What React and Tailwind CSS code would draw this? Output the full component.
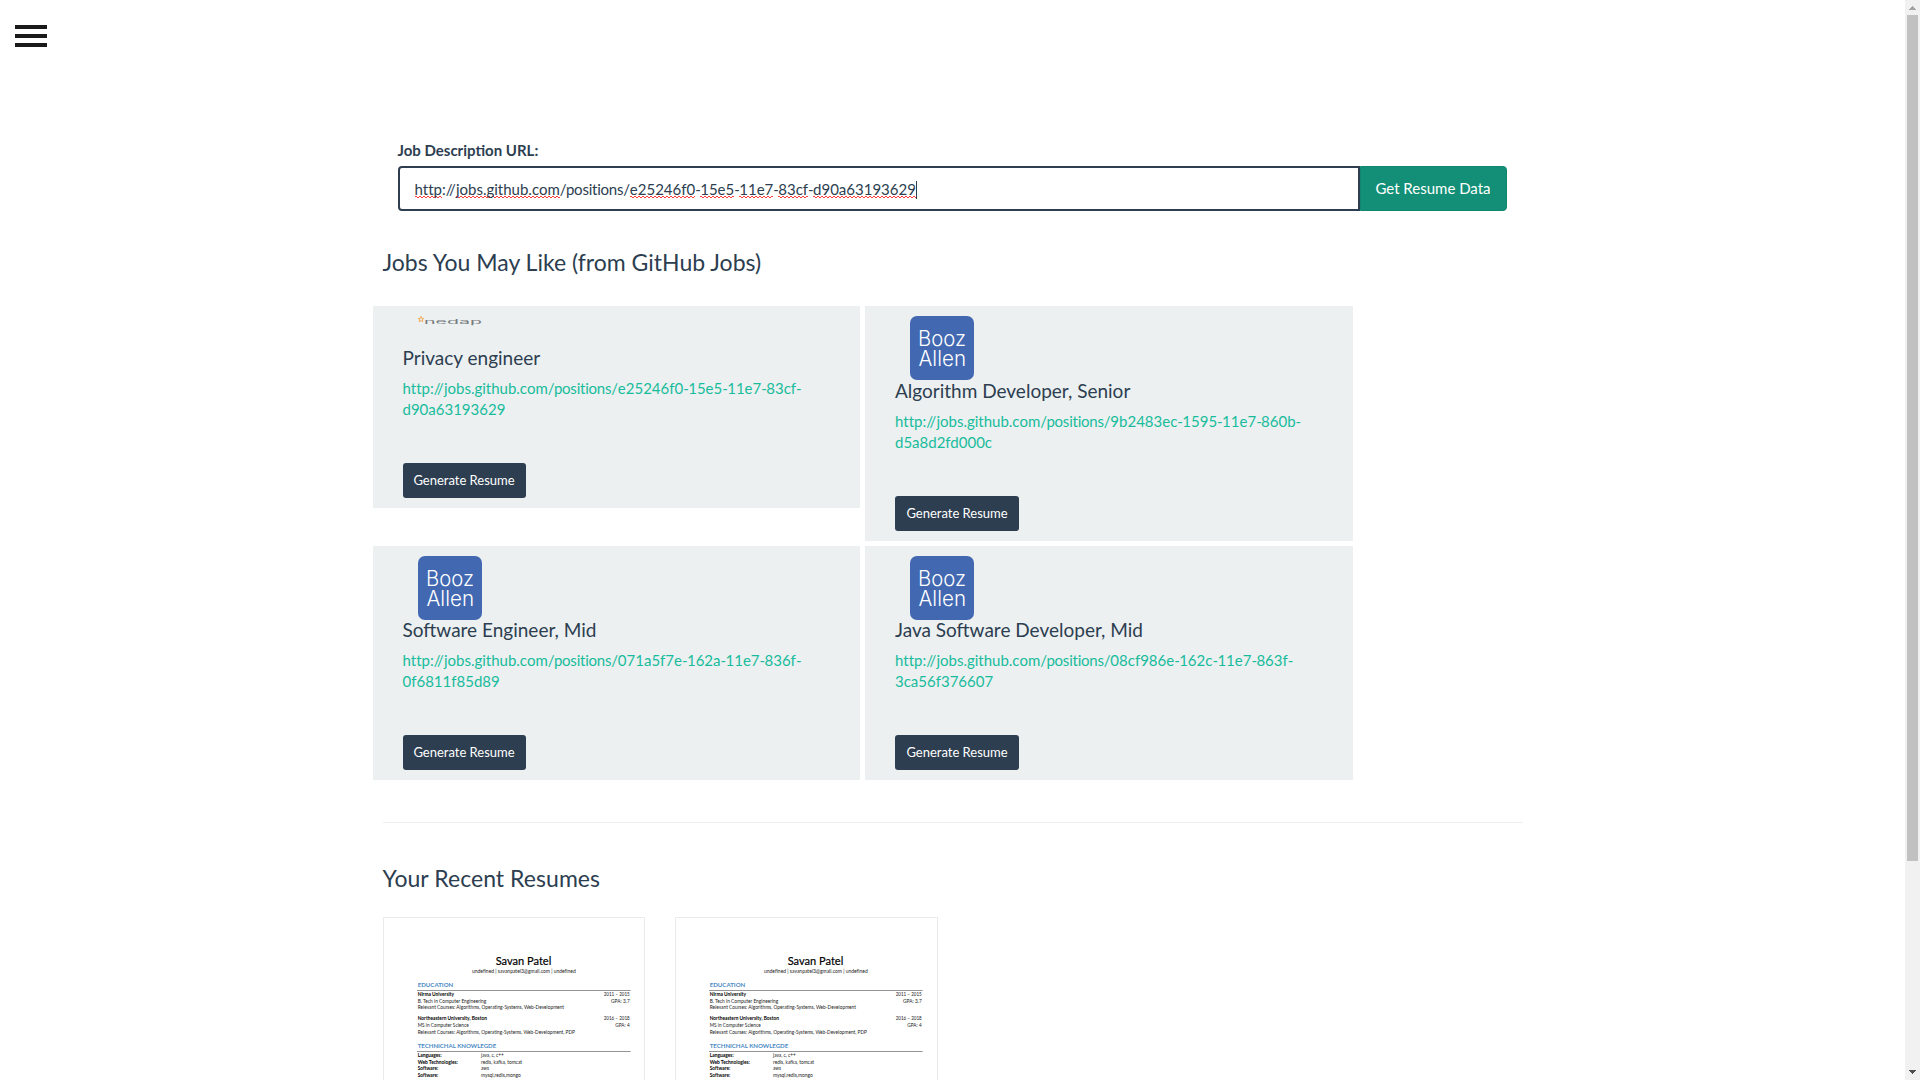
const JOBS = [
  { title: "Privacy engineer", id: "e25246f0-15e5-11e7-83cf-d90a63193629", logo: "nedap", box: "h-[202px]", titleGap: "pt-[21px]", button: "w-[123px]" },
  { title: "Algorithm Developer, Senior", id: "9b2483ec-1595-11e7-860b-d5a8d2fd000c", logo: "booz", box: "h-[235px]", titleGap: "pt-0", button: "w-[124px]" },
  { title: "Software Engineer, Mid", id: "071a5f7e-162a-11e7-836f-0f6811f85d89", logo: "booz", box: "h-[234px]", titleGap: "-mt-px", button: "w-[123px]" },
  { title: "Java Software Developer, Mid", id: "08cf986e-162c-11e7-863f-3ca56f376607", logo: "booz", box: "h-[234px]", titleGap: "-mt-px", button: "w-[124px]" },
];

const URL_PARTS = [
  ["http", true], ["://", false], ["jobs.github.com", true], ["/positions/", false],
  ["e25246f0", true], ["-", false], ["15e5", true], ["-", false], ["11e7", true],
  ["-", false], ["83cf", true], ["-", false], ["d90a63193629", true],
];

const PART_TRACKING = { "-": "tracking-[-0.6px]", "/positions/": "tracking-[-0.22px]" };

// [text, x, baseline, width, style]
const RESUME = [
  ["Savan Patel", 112.7, 47.5, 55.6, "name"],
  ["undefined | savanpatel3@gmail.com | undefined", 89, 56, 103.7, "body"],
  ["EDUCATION", 34.7, 70, 35.6, "head"],
  ["Nirma University", 34.7, 79, 36.4, "bold"],
  ["2011 – 2015", 220.7, 79, 26, "body"],
  ["B. Tech in Computer Engineering", 34.7, 86, 68.6, "body"],
  ["GPA: 3.7", 228, 86, 18.7, "body"],
  ["Relevant Courses: Algorithms, Operating-Systems, Web-Development", 34.7, 92, 146.3, "body"],
  ["Northeastern University, Boston", 34.7, 103, 69.3, "bold"],
  ["2016 – 2018", 220.7, 103, 26, "body"],
  ["MS in Computer Science", 34.7, 110, 51, "body"],
  ["GPA: 4", 232.3, 110, 14.4, "body"],
  ["Relevant Courses: Algorithms, Operating-Systems, Web-Development, PDP", 34.7, 117, 157.3, "body"],
  ["TECHNICHAL KNOWLEGDE", 34.7, 131, 78.5, "head"],
  ["Languages:", 34.7, 140, 24, "bold"],
  ["java, c, c++", 98, 140, 22.7, "body"],
  ["Web Technologies:", 34.7, 147, 40.3, "bold"],
  ["redis, kafka, tomcat", 98, 147, 41, "body"],
  ["Software:", 34.7, 153, 20.6, "bold"],
  ["aws", 98, 153, 8, "body"],
  ["Software:", 34.7, 160, 20.6, "bold"],
  ["mysql,redis,mongo", 98, 160, 39.7, "body"],
];

const RESUME_STYLES = {
  name: "text-[12px] fill-black stroke-black [stroke-width:0.2px]",
  body: "text-[5.9px] fill-[#222]",
  bold: "text-[5.9px] font-bold fill-black",
  head: "text-[5.8px] font-bold fill-[#4a8ac4]",
};

function BoozLogo() {
  return (
    <svg className="block h-16 w-16" viewBox="0 0 64 64">
      <rect width="64" height="64" rx="7" fill="#4168b1" />
      <g fill="#fff" className="font-['Inter'] text-[21px] font-light">
        <text x="8" y="29.7" textLength="48" lengthAdjust="spacingAndGlyphs">Booz</text>
        <text x="8.5" y="50" textLength="47.5" lengthAdjust="spacingAndGlyphs">Allen</text>
      </g>
    </svg>
  );
}

function NedapLogo() {
  return (
    <svg className="block h-[10px] w-16" viewBox="0 0 64 10">
      <path d="M3 0.4L3.7 2.3L5.8 2.5L4.2 3.7L4.8 5.7L3 4.6L1.2 5.7L1.8 3.7L0.2 2.5L2.3 2.3Z" stroke="#f2a03d" strokeWidth="0.8" fill="none" />
      <g transform="translate(6 7.9) scale(1 .6)">
        <text fill="#777c7f" className="font-['Inter'] text-[11px]" textLength="58" lengthAdjust="spacingAndGlyphs">nedap</text>
      </g>
    </svg>
  );
}

// Tightens the hyphens inside a posting's id.
function Hyphenated({ text }) {
  return text.split(/(?<=-)/).map((part, i) =>
    part.endsWith("-") ? (
      <span key={i}>{part.slice(0, -1)}<span className="tracking-[-0.6px]">-</span></span>
    ) : (
      <span key={i}>{part}</span>
    )
  );
}

function JobCard({ job }) {
  return (
    <article className={"flex flex-col bg-[#ecf0f1] px-[30px] py-[10px] " + job.box}>
      <div className="ml-[15px]">{job.logo === "booz" ? <BoozLogo /> : <NedapLogo />}</div>
      <div className={job.titleGap}>
        <h4 className="text-[19px] leading-[21px] text-[#2c3e50]">{job.title}</h4>
      </div>
      <a className="mt-[10px] block text-[15px] leading-[21px] text-[#18bc9c] [font-variant-ligatures:none]">
        http://jobs.github.com<span className="tracking-[-0.22px]">/positions/</span><Hyphenated text={job.id} />
      </a>
      <button className={"mt-auto h-[35px] rounded-[3px] bg-[#2c3e50] pb-[2px] text-[13px] leading-[20px] text-white " + job.button}>
        Generate Resume
      </button>
    </article>
  );
}

function ResumeThumb({ width }) {
  return (
    <div className={"h-[340px] border border-[#ecebeb] bg-white " + width}>
      <svg className="-mt-px -ml-px block h-[340px] w-[262px] font-['Lato'] [font-variant-ligatures:none]" viewBox="0 0 262 340">
        <path d="M34 73.5H247.7M34 134.5H247.7" stroke="#888" strokeWidth="0.9" />
        {RESUME.map(([text, x, y, w, kind], i) => (
          <text key={i} x={x} y={y} textLength={w} lengthAdjust="spacingAndGlyphs" className={RESUME_STYLES[kind]}>{text}</text>
        ))}
      </svg>
    </div>
  );
}

export default function App() {
  return (
    <div className="flex h-[1080px] overflow-hidden bg-white font-['Lato',sans-serif] text-[15px] text-[#2c3e50]">
      <div className="relative flex-1 overflow-hidden">
        <button className="absolute top-[25px] left-[15px] flex flex-col gap-[5px]">
          <span className="block h-1 w-8 bg-[#1a1a1a]" />
          <span className="block h-1 w-8 bg-[#1a1a1a]" />
          <span className="block h-1 w-8 bg-[#1a1a1a]" />
        </button>
        <main className="mx-auto w-[1140px] pt-[140px]">
          <form className="pr-[16px] pl-[15px]">
            <label className="block text-[15px] leading-[21px] font-bold">Job Description URL:</label>
            <div className="mt-[5px] flex h-[45px]">
              <div className="flex flex-1 items-center rounded-l-[4px] border-2 border-[#2c3e50] pt-[2px] pl-[15px]">
                <span className="whitespace-nowrap [font-variant-ligatures:none]">
                  {URL_PARTS.map(([t, bad], i) =>
                    bad ? (
                      <span key={i} className="bg-[image:linear-gradient(90deg,#ff3b3b_2px,transparent_2px),linear-gradient(90deg,transparent_2px,#ff3b3b_2px)] bg-[length:4px_1px] bg-[position:0_calc(100%-1px),0_100%] bg-repeat-x">{t}</span>
                    ) : (
                      <span key={i} className={PART_TRACKING[t]}>{t}</span>
                    )
                  )}
                </span>
                <span className="h-[18px] w-px bg-[#2c3e50]" />
              </div>
              <button className="w-[147px] rounded-r-[4px] border border-[#11866f] bg-[#128f76] text-[15px] text-white">Get Resume Data</button>
            </div>
          </form>
          <h2 className="mt-[38px] text-[23px] leading-[26px]">Jobs You May Like (from GitHub Jobs)</h2>
          <section className="mt-[31px] -ml-[10px] grid w-[981px] grid-cols-[487.5px_487.5px] items-start gap-[5px]">
            {JOBS.map((job) => <JobCard key={job.id} job={job} />)}
          </section>
          <hr className="mt-[42px] border-[#ecf0f1]" />
          <h2 className="mt-[42px] text-[23px] leading-[26px] tracking-[0.05px]">Your Recent Resumes</h2>
          <section className="mt-[26px] flex">
            <ResumeThumb width="mr-[30px] w-[262px]" />
            <ResumeThumb width="w-[263px]" />
          </section>
        </main>
      </div>
      <aside className="flex w-[15px] flex-col items-center justify-between bg-[#f1f1f1]">
        <svg className="h-[15px] w-[15px]" viewBox="0 0 15 15" shapeRendering="crispEdges"><path d="M4 10L7.5 6L11 10Z" fill="#a3a3a3" /></svg>
        <div className="mb-auto h-[846px] w-[11px] bg-[#c1c1c1]" />
        <svg className="h-[15px] w-[15px]" viewBox="0 0 15 15" shapeRendering="crispEdges"><path d="M4 5L7.5 9L11 5Z" fill="#505050" /></svg>
      </aside>
    </div>
  );
}
